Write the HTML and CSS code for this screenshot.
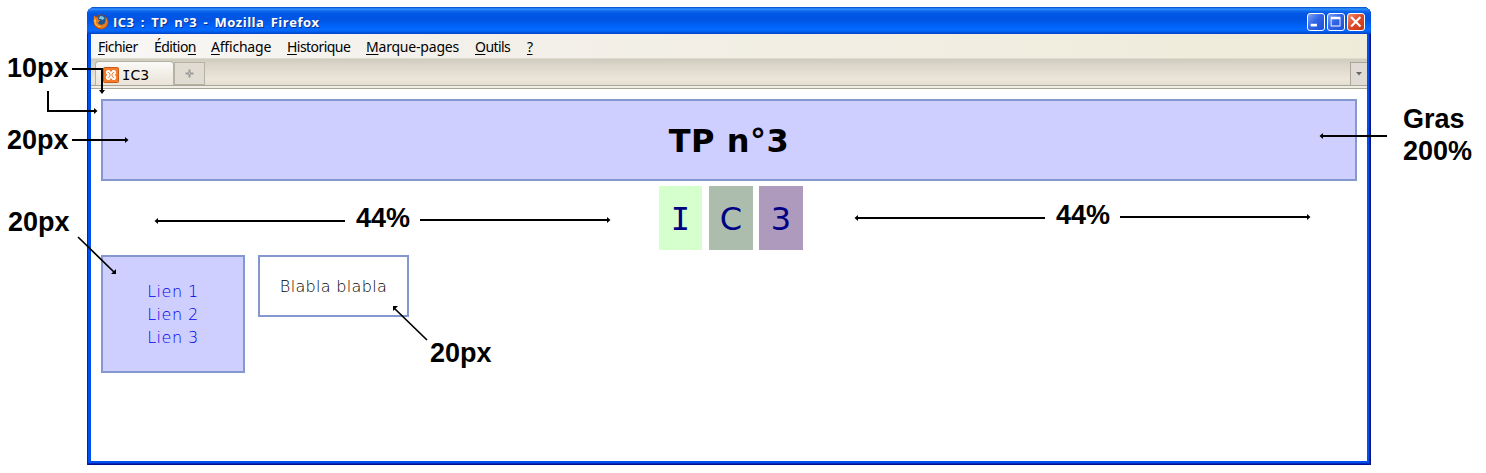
FILE: index.html
```html
<!DOCTYPE html>
<html lang="fr">
<head>
<meta charset="utf-8">
<title>IC3 : TP n°3</title>
<link rel="stylesheet" href="styles.css">
</head>
<body>
<div class="stage">
  <div class="window">
    <div class="titlebar">
      <svg class="firefox" width="16" height="16" viewBox="0 0 16 16">
        <circle cx="8" cy="8" r="7.500" fill="#b0440f"/>
        <circle cx="8.600" cy="6.600" r="5.700" fill="#1f568f"/>
        <path d="M7 2l3 .5 1.500 2-2 1.500-1.500-1-2 0z" fill="#7cc7e9"/>
        <path d="M1 1.500l2.300 2 2.200-.3-.8 2 2.800 1.300-2.200 1.500.2 2 3 .9 3.200-1.400 1-3.200-.6-3.200 2.100 2.100.7 3.500-1.700 3.900-3.500 2.100-4.500-.7-3.500-3.200L.6 7z" fill="#e67c1b"/>
        <path d="M1.600 4.500l1.500 1.500-.5 3 2.100 2.500 4 .9-2.300.8-3.800-2L1.200 8z" fill="#ffc04c"/>
      </svg>
      <span class="caption">IC3 : TP n°3 - Mozilla Firefox</span>
      <div class="controls">
        <svg class="control" width="18" height="18" viewBox="0 0 18 18"><rect x="3" y="11" width="7" height="3" fill="#fff"/></svg>
        <svg class="control" width="18" height="18" viewBox="0 0 18 18"><path d="M3 3h11v11H3zM4 6v7h9V6z" fill="#fff" fill-rule="evenodd"/></svg>
        <svg class="control close" width="18" height="18" viewBox="0 0 18 18"><path d="M3.500 3.500l10.500 10.500M14 3.500L3.500 14" stroke="#fff" stroke-width="2.400"/></svg>
      </div>
    </div>
    <div class="menubar">
      <span class="menu fichier"><u>F</u>ichier</span>
      <span class="menu edition">Éditio<u>n</u></span>
      <span class="menu affichage"><u>A</u>ffichage</span>
      <span class="menu historique"><u>H</u>istorique</span>
      <span class="menu marque"><u>M</u>arque-pages</span>
      <span class="menu outils"><u>O</u>utils</span>
      <span class="menu"><u>?</u></span>
    </div>
    <div class="tabs">
      <div class="tab">
        <svg width="16" height="16" viewBox="0 0 16 16">
          <rect x=".5" y=".5" width="15" height="15" rx="1" fill="#f47b2c" stroke="#c95a16"/>
          <path d="M4.300 3h2L8 5l1.700-2h2L13 4.500v2L11.800 8 13 9.500v2L11.700 13h-2L8 11l-1.700 2h-2L3 11.500v-2L4.200 8 3 6.500v-2z" fill="#fff"/>
          <path d="M4.800 5.500h1L7 7v2l-1.200 1.500h-1M11.200 5.500h-1L9 7v2l1.200 1.500h1" fill="none" stroke="#f47b2c"/>
        </svg>
        <span><span class="serif-i">I</span>C3</span>
      </div>
      <div class="newtab"><svg width="9" height="9" viewBox="0 0 9 9"><path d="M3.500.5h2v3h3v2h-3v3h-2v-3h-3v-2h3z" fill="#999"/><path d="M4 4h1v1H4z" fill="#eee"/></svg></div>
      <div class="alltabs"><svg width="6" height="4" viewBox="0 0 6 4"><path d="M0 0h6L3 3.500z" fill="#666"/></svg></div>
    </div>
    <div class="page">
      <h1 class="banner">TP n°3</h1>
      <div class="tiles"><span class="tile green serif-i">I</span><span class="tile gray">C</span><span class="tile purple">3</span></div>
      <div class="columns">
        <div class="links"><span>Lien 1</span><span>Lien 2</span><span>Lien 3</span></div>
        <div class="text">Blabla blabla</div>
      </div>
    </div>
  </div>
  <svg class="arrows" width="1486" height="473" viewBox="0 0 1486 473">
    <g fill="none" stroke="#000" stroke-width="2">
      <path d="M72 69h30v22M48 91v20h47M72 140h54M1387 136h-65M345 221H157M420 220h188M1045 218H857M1120 217h188"/>
      <path d="M78 237l37 36M427 340l-33-32" stroke-width="1.700"/>
    </g>
    <path d="M99 90h6l-3 4zM94 108v6l3.500-3zM125 137v6l3.500-3zM1323 133v6l-3.500-3zM158 218v6l-3.500-3zM607 217v6l3.500-3zM858 215v6l-3.500-3zM1307 214v6l3.500-3zM116 269v5h-5zM393 311v-5h5z"/>
  </svg>
  <span class="note n1">10px</span>
  <span class="note n2">20px</span>
  <span class="note n3">20px</span>
  <span class="note n4">44%</span>
  <span class="note n5">44%</span>
  <span class="note n6">20px</span>
  <span class="note n7">Gras<br>200%</span>
</div>
</body>
</html>
```
FILE: styles.css
```css
* { box-sizing: border-box; }
body { margin: 0; background: #fff; }
.stage { position: relative; width: 1486px; height: 473px; padding: 7px 0 0 87px; overflow: hidden; }
.window {
  width: 1284px; height: 458px; padding: 0 4px 4px;
  border-radius: 8px 8px 0 0;
  background: #0050ee;
  box-shadow: inset 1px 0 #0020c0, inset -1px 0 #00138c, inset -2px 0 #0026b4, inset 0 -1px #00138c, inset 0 -2px #0028c0;
}
.titlebar {
  display: flex; align-items: center; height: 27px; margin: 0 -4px; padding: 3px 6px 0;
  border-radius: 8px 8px 0 0;
  background: linear-gradient(#0048c8 0, #3292ff 2px, #0e68ec 4px, #0056e5 7px, #0054e3 13px, #0062fb 19px, #066aff 23px, #005ae8 25px, #0040c4 27px);
}
.caption {
  margin-left: 4px; color: #fff; white-space: nowrap;
  font: bold 13px/18px "Open Sans", "Noto Sans", sans-serif;
  letter-spacing: 0.500px; word-spacing: 2.400px; text-shadow: 1px 1px #0a2f91;
}
.controls { display: flex; gap: 2px; margin-left: auto; }
.control { border: 1px solid #fff; border-radius: 3px; background: linear-gradient(135deg, #7ea4f8, #3264e6 45%, #1b50d8); }
.close { background: linear-gradient(135deg, #f0906f, #e0492a 45%, #c83610); }
.menubar {
  display: flex; height: 25px; padding-left: 7px;
  background: linear-gradient(90deg, #f8f7f5, #f3f0ea 30%, #efebd9);
  border-bottom: 1px solid #dedccc;
  color: #000; font: 14px/26px "Noto Sans", sans-serif;
}
.menu { white-space: nowrap; letter-spacing: -0.550px; }
.menu u { text-underline-offset: 2px; text-decoration-thickness: 1px; }
.fichier { width: 56px; }
.edition { width: 57px; }
.affichage { width: 76px; }
.affichage { letter-spacing: -0.200px; }
.historique { width: 79px; }
.marque { width: 109px; letter-spacing: -0.200px; }
.outils { width: 52px; }
.tabs {
  display: flex; align-items: flex-end; height: 30px; padding: 0 0 4px 4px;
  background: linear-gradient(#cfccbf 0, #ddd8cb 8px, #ece5da 20px, #e4ddd0 26px, #aaa697 26px, #aaa697 27px, #f0ede4 27px, #f0ede4 29px, #aaa697 29px);
}
.tab {
  display: flex; align-items: center; gap: 3px; width: 79px; height: 24px; padding: 3px 0 0 7px;
  border: 1px solid #b5b1a3; border-bottom: 0; border-radius: 4px 4px 0 0;
  background: linear-gradient(#fbfaf8, #f2eee7 50%, #e9e3d8);
  font: 14px/20px "DejaVu Sans", sans-serif;
}
.serif-i { font-family: "DejaVu Sans Mono", monospace; }
.newtab { display: grid; place-items: center; width: 31px; height: 23px; border: 1px solid #b5b1a3; background: #e0dcd1; }
.alltabs { display: grid; place-items: center; width: 17px; height: 23px; margin-left: auto; border: 1px solid #aaa697; border-width: 1px 0 0 1px; background: #e0dcd5; }
.page { height: 372px; padding: 10px; background: #fff; font-family: "DejaVu Sans", Verdana, sans-serif; }
.banner {
  width: 1256px; height: 82px; margin: 0; padding: 21px 20px 19px;
  border: 2px solid #8497ce; background: #ceceff;
  text-align: center; font-size: 32px; line-height: 38px; letter-spacing: 0.500px;
}
.tiles { display: flex; gap: 6px; margin: 5px 0 5px 558px; }
.tile { width: 44px; height: 64px; color: #000084; font-size: 32px; line-height: 67px; text-align: center; }
.green { width: 43px; margin-right: 1px; background: #d6ffce; }
.gray { background: #adbdad; }
.purple { background: #ad9abd; }
.columns { display: flex; align-items: flex-start; gap: 13px; }
.links {
  display: flex; flex-direction: column; width: 144px; height: 118px; padding: 23px 20px 21px;
  border: 2px solid #8497ce; background: #ceceff; color: #0000f0;
  text-align: center; font-size: 16px; line-height: 23px; font-weight: 200; letter-spacing: 0.500px;
}
.text {
  width: 151px; height: 62px; border: 2px solid #8497ce; padding: 18px 18px 17px;
  font-size: 16px; line-height: 23px; font-weight: 200; letter-spacing: 0.330px; text-align: center; white-space: nowrap;
}
.arrows { position: absolute; left: 0; top: 0; }
.note { position: absolute; color: #000; font: bold 27px/32px "Liberation Sans", Arial, sans-serif; white-space: nowrap; }
.n1 { left: 7px; top: 52px; }
.n2 { left: 7px; top: 124px; }
.n3 { left: 8px; top: 206px; }
.n4 { left: 356px; top: 202px; }
.n5 { left: 1056px; top: 199px; }
.n6 { left: 430px; top: 337px; }
.n7 { left: 1403px; top: 103px; }
```
